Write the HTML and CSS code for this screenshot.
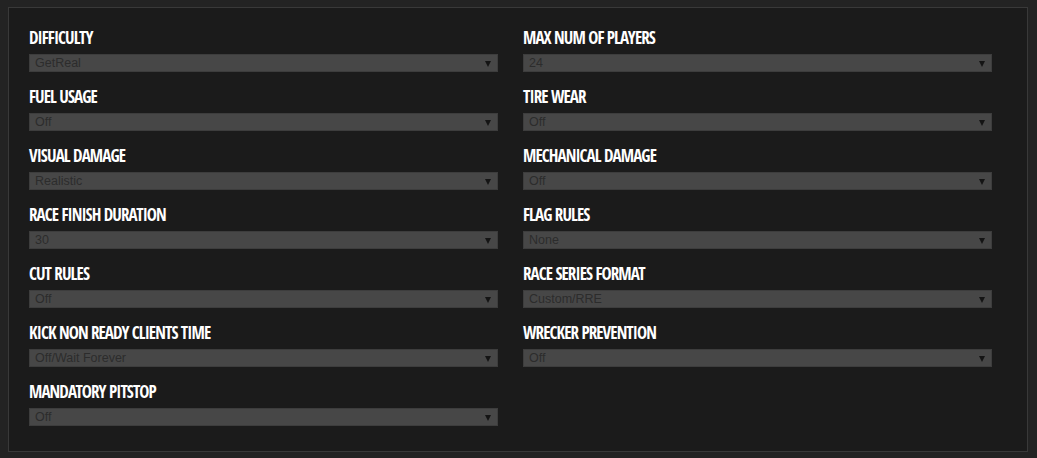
FILE: index.html
```html
<!DOCTYPE html>
<html>
<head>
<meta charset="utf-8">
<link rel="stylesheet" href="styles.css">
</head>
<body>
<div class="panel">
  <div class="grid">
    <div class="field"><div class="label">DIFFICULTY</div><div class="select"><span class="value">GetReal</span><span class="arrow"></span></div></div>
    <div class="field"><div class="label">MAX NUM OF PLAYERS</div><div class="select"><span class="value">24</span><span class="arrow"></span></div></div>
    <div class="field"><div class="label">FUEL USAGE</div><div class="select"><span class="value">Off</span><span class="arrow"></span></div></div>
    <div class="field"><div class="label">TIRE WEAR</div><div class="select"><span class="value">Off</span><span class="arrow"></span></div></div>
    <div class="field"><div class="label">VISUAL DAMAGE</div><div class="select"><span class="value">Realistic</span><span class="arrow"></span></div></div>
    <div class="field"><div class="label">MECHANICAL DAMAGE</div><div class="select"><span class="value">Off</span><span class="arrow"></span></div></div>
    <div class="field"><div class="label">RACE FINISH DURATION</div><div class="select"><span class="value">30</span><span class="arrow"></span></div></div>
    <div class="field"><div class="label">FLAG RULES</div><div class="select"><span class="value">None</span><span class="arrow"></span></div></div>
    <div class="field"><div class="label">CUT RULES</div><div class="select"><span class="value">Off</span><span class="arrow"></span></div></div>
    <div class="field"><div class="label">RACE SERIES FORMAT</div><div class="select"><span class="value">Custom/RRE</span><span class="arrow"></span></div></div>
    <div class="field"><div class="label">KICK NON READY CLIENTS TIME</div><div class="select"><span class="value">Off/Wait Forever</span><span class="arrow"></span></div></div>
    <div class="field"><div class="label">WRECKER PREVENTION</div><div class="select"><span class="value">Off</span><span class="arrow"></span></div></div>
    <div class="field"><div class="label">MANDATORY PITSTOP</div><div class="select"><span class="value">Off</span><span class="arrow"></span></div></div>
  </div>
</div>
</body>
</html>
```
FILE: styles.css
```css
html, body {
  margin: 0;
  background: #232323;
}
body {
  padding: 7px 8px;
}
.panel {
  box-sizing: border-box;
  width: 1020px;
  height: 445px;
  background: #1b1b1b;
  border: 1px solid #393939;
  padding: 20px 20px 0 20px;
}
.grid {
  display: grid;
  grid-template-columns: 469px 469px;
  column-gap: 25px;
  row-gap: 15px;
}
.field {
  display: flex;
  flex-direction: column;
}
.label {
  font-family: "Open Sans Condensed", "Open Sans", sans-serif;
  font-stretch: condensed;
  font-weight: 700;
  font-size: 17px;
  line-height: 20px;
  height: 20px;
  letter-spacing: -0.9px;
  color: #ffffff;
  margin-bottom: 6px;
  white-space: nowrap;
}
.select {
  box-sizing: border-box;
  height: 18px;
  background: #474747;
  border: 1px solid #3d3d3d;
  display: flex;
  align-items: center;
  justify-content: space-between;
  padding: 0 6px 0 5px;
}
.value {
  font-family: "Liberation Sans", Arial, sans-serif;
  font-size: 12.5px;
  line-height: 16px;
  color: #2c2c2c;
}
.arrow {
  width: 0;
  height: 0;
  border-left: 3px solid transparent;
  border-right: 3px solid transparent;
  border-top: 6px solid #141414;
  margin-top: 1px;
}
```
